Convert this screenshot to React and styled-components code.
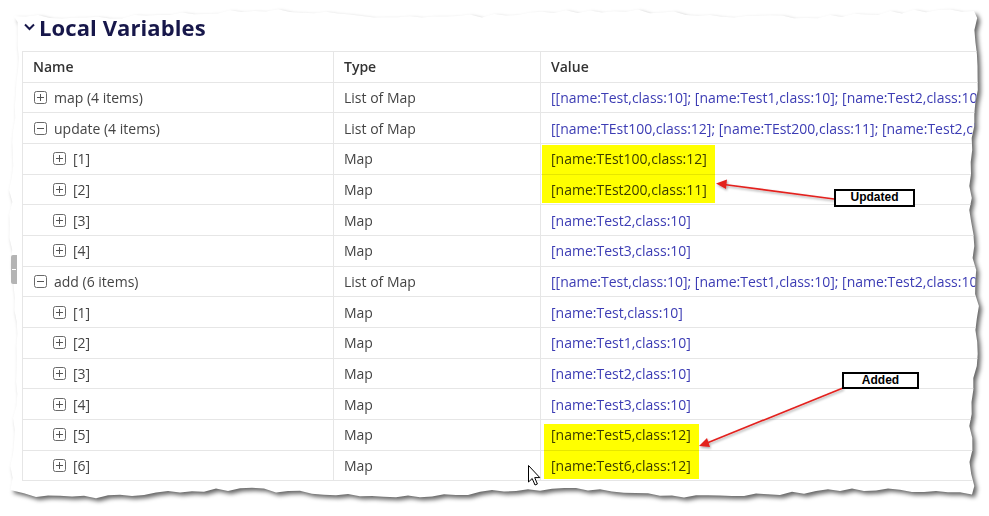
import React from 'react';
import styled, { createGlobalStyle } from 'styled-components';

const GlobalStyle = createGlobalStyle`
  html, body {
    margin: 0;
    padding: 0;
    background: #ffffff;
  }
  body {
    font-family: "Open Sans", "Noto Sans", sans-serif;
    width: 989px;
    height: 516px;
    overflow: hidden;
  }
`;

// deterministic jitter for the torn paper outline
const jitter = (i, seed) => {
  const v = Math.sin(i * 12.9898 + seed * 78.233) * 43758.5453;
  return v - Math.floor(v);
};

const buildTornEdge = () => {
  const pts = [];
  const step = 12;
  for (let x = 14; x <= 974; x += step) {
    const y = 14 + Math.sin(x / 55) * 3 + (jitter(x, 1) - 0.5) * 4;
    pts.push(`${x}px ${y.toFixed(1)}px`);
  }
  for (let y = 18; y <= 490; y += step) {
    const x = 974 + Math.sin(y / 40) * 3.5 + (jitter(y, 2) - 0.5) * 4;
    pts.push(`${x.toFixed(1)}px ${y}px`);
  }
  for (let x = 972; x >= 14; x -= step) {
    const y = 493 + Math.sin(x / 50) * 3.5 + (jitter(x, 3) - 0.5) * 4;
    pts.push(`${x}px ${y.toFixed(1)}px`);
  }
  for (let y = 490; y >= 18; y -= step) {
    const x = 14 + Math.sin(y / 45) * 3.5 + (jitter(y, 4) - 0.5) * 4;
    pts.push(`${x.toFixed(1)}px ${y}px`);
  }
  return `polygon(${pts.join(', ')})`;
};

const TORN = buildTornEdge();

const Stage = styled.div`
  position: relative;
  width: 989px;
  height: 516px;
`;

const Paper = styled.div`
  filter: drop-shadow(3px 3px 2px rgba(0, 0, 0, 0.6));
`;

const Sheet = styled.div`
  width: 989px;
  height: 516px;
  box-sizing: border-box;
  padding: 12px 0 0 22px;
  background: #ffffff;
  overflow: hidden;
  clip-path: ${TORN};
`;

const Heading = styled.h2`
  display: flex;
  align-items: center;
  gap: 4px;
  margin: 0;
  height: 30px;
  padding-left: 2px;
  font-family: "Open Sans", sans-serif;
  font-weight: 700;
  font-size: 22px;
  line-height: 30px;
  color: #17174a;
  letter-spacing: 0.1px;
`;

const Table = styled.div`
  margin-top: 9px;
  width: 967px;
  display: grid;
  grid-template-columns: 311px 207px 1fr;
  border-top: 1px solid #e6e6e6;
  border-left: 1px solid #e6e6e6;
`;

const Cell = styled.div`
  height: 29.66px;
  box-sizing: content-box;
  display: flex;
  align-items: center;
  gap: 7px;
  padding-left: ${(p) => p.$pad || 10}px;
  border-right: 1px solid #e6e6e6;
  border-bottom: 1px solid #e6e6e6;
  font-size: 14px;
  color: ${(p) => (p.$value ? '#3c3cb4' : p.$head ? '#333333' : '#444444')};
  font-weight: ${(p) => (p.$head ? 600 : 400)};
  white-space: nowrap;
  overflow: hidden;
`;

const ToggleIcon = ({ open }) => (
  <svg width="13" height="13" viewBox="0 0 13 13" style={{ flex: 'none' }}>
    <rect x="0.5" y="0.5" width="12" height="12" rx="2" fill="none" stroke="#6a6a6a" />
    <line x1="3" y1="6.5" x2="10" y2="6.5" stroke="#555" />
    {!open && <line x1="6.5" y1="3" x2="6.5" y2="10" stroke="#555" />}
  </svg>
);

const Highlight = styled.div`
  position: absolute;
  background: #ffff00;
  mix-blend-mode: multiply;
`;

const Callout = styled.div`
  position: absolute;
  box-sizing: border-box;
  border: 2px solid #000;
  background: #fff;
  font-family: "Liberation Sans", Arial, sans-serif;
  font-weight: 700;
  font-size: 12px;
  line-height: 13px;
  text-align: center;
  color: #000;
`;

const Handle = styled.div`
  position: absolute;
  left: 11px;
  top: 255px;
  width: 6px;
  height: 29px;
  border-radius: 2px 0 0 2px;
  background: #b4b4b4;
  &::after {
    content: '';
    position: absolute;
    left: 1px;
    top: 14px;
    width: 4px;
    height: 1px;
    background: #fff;
  }
`;

const Overlay = styled.svg`
  position: absolute;
  left: 0;
  top: 0;
  pointer-events: none;
`;

const rows = [
  { name: 'map (4 items)', type: 'List of Map', value: '[[name:Test,class:10]; [name:Test1,class:10]; [name:Test2,class:10]; [name:Test3,class:10]]', top: true },
  { name: 'update (4 items)', type: 'List of Map', value: '[[name:TEst100,class:12]; [name:TEst200,class:11]; [name:Test2,class:10]; [name:Test3,class:10]]', top: true, open: true },
  { name: '[1]', type: 'Map', value: '[name:TEst100,class:12]' },
  { name: '[2]', type: 'Map', value: '[name:TEst200,class:11]' },
  { name: '[3]', type: 'Map', value: '[name:Test2,class:10]' },
  { name: '[4]', type: 'Map', value: '[name:Test3,class:10]' },
  { name: 'add (6 items)', type: 'List of Map', value: '[[name:Test,class:10]; [name:Test1,class:10]; [name:Test2,class:10]; [name:Test3,class:10]; [name:Test5,class:12]; [name:Test6,class:12]]', top: true, open: true },
  { name: '[1]', type: 'Map', value: '[name:Test,class:10]' },
  { name: '[2]', type: 'Map', value: '[name:Test1,class:10]' },
  { name: '[3]', type: 'Map', value: '[name:Test2,class:10]' },
  { name: '[4]', type: 'Map', value: '[name:Test3,class:10]' },
  { name: '[5]', type: 'Map', value: '[name:Test5,class:12]' },
  { name: '[6]', type: 'Map', value: '[name:Test6,class:12]' },
];

export default function App() {
  return (
    <Stage>
      <GlobalStyle />
      <Paper>
        <Sheet>
          <Heading>
            <svg width="11" height="8" viewBox="0 0 11 8">
              <path d="M1 1.5 L5.5 6 L10 1.5" fill="none" stroke="#17174a" strokeWidth="2" />
            </svg>
            Local Variables
          </Heading>
          <Table>
            <Cell $head $pad={10}>Name</Cell>
            <Cell $head>Type</Cell>
            <Cell $head>Value</Cell>
            {rows.map((r, i) => (
              <React.Fragment key={i}>
                <Cell $pad={r.top ? 11 : 30}>
                  <ToggleIcon open={r.open} />
                  {r.name}
                </Cell>
                <Cell>{r.type}</Cell>
                <Cell $value>{r.value}</Cell>
              </React.Fragment>
            ))}
          </Table>
        </Sheet>
      </Paper>

      <Handle />
      <Highlight style={{ left: 542, top: 145, width: 173, height: 58 }} />
      <Highlight style={{ left: 544, top: 424, width: 155, height: 55 }} />

      <Overlay width="989" height="516" viewBox="0 0 989 516">
        <defs>
          <filter id="sh" x="-20%" y="-20%" width="140%" height="140%">
            <feDropShadow dx="1" dy="1.5" stdDeviation="0.8" floodColor="#000" floodOpacity="0.35" />
          </filter>
        </defs>
        <g filter="url(#sh)">
          <line x1="834" y1="199" x2="724" y2="184.5" stroke="#e3201f" strokeWidth="1.6" />
          <polygon points="716,183.5 727,179.5 726,189" fill="#e3201f" />
          <line x1="843" y1="388" x2="707" y2="443" stroke="#e3201f" strokeWidth="1.6" />
          <polygon points="699,446 707,438 710,447" fill="#e3201f" />
        </g>
        <path
          d="M528.5 465.5 L528.5 482 L532.2 478.5 L535 485 L537.4 484 L534.7 477.6 L539.8 477.6 Z"
          fill="#fff"
          stroke="#000"
          strokeWidth="1"
          strokeLinejoin="round"
        />
      </Overlay>

      <Callout style={{ left: 834, top: 189, width: 81, height: 18 }}>Updated</Callout>
      <Callout style={{ left: 842, top: 372, width: 77, height: 17 }}>Added</Callout>
    </Stage>
  );
}
